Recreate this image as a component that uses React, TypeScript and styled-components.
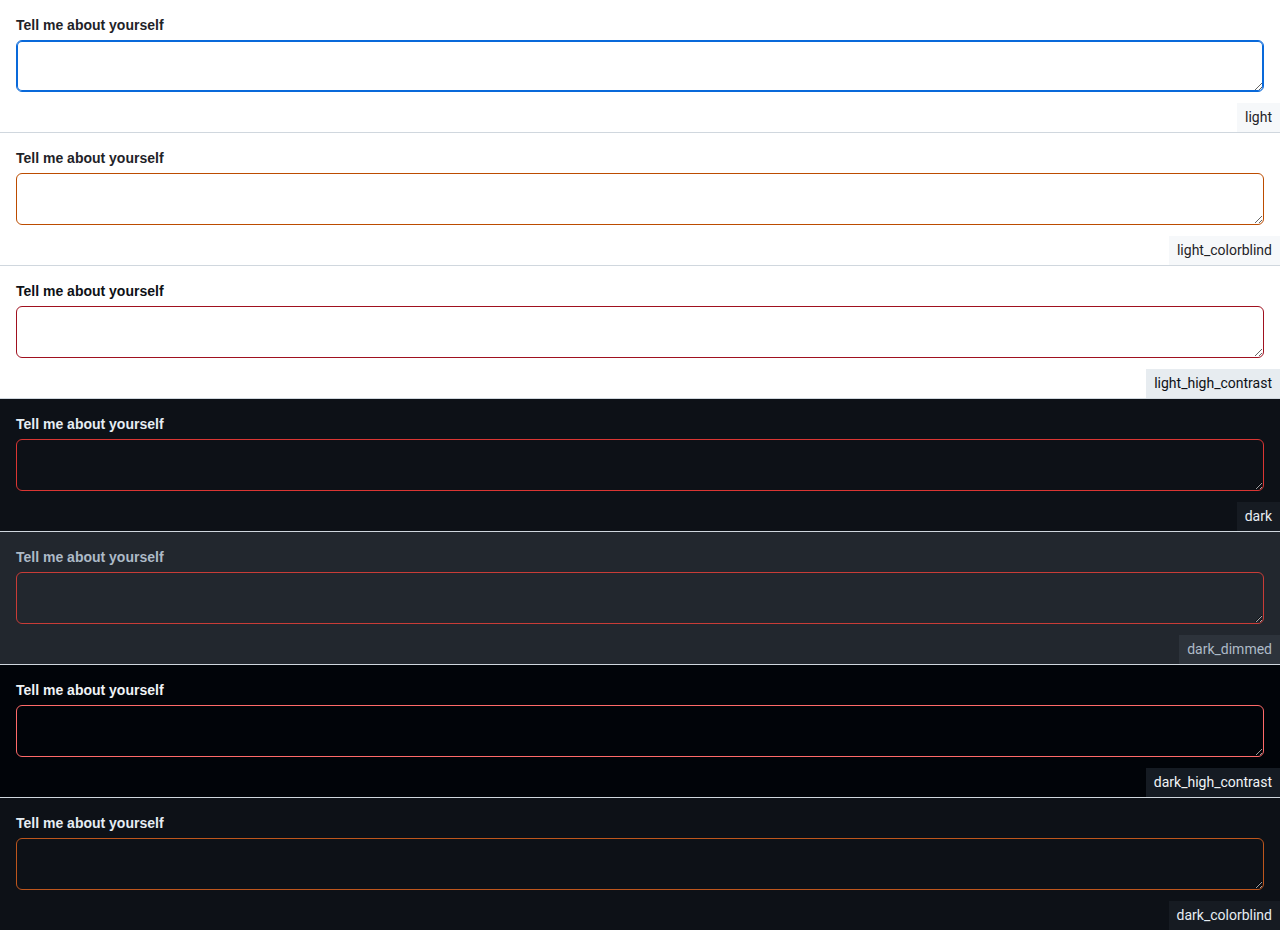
import React from 'react';
import styled, { createGlobalStyle } from 'styled-components';

const GlobalStyle = createGlobalStyle`
  html, body {
    margin: 0;
    padding: 0;
    background: #ffffff;
  }
  * {
    box-sizing: border-box;
  }
`;

type Theme = {
  name: string;
  bg: string;
  fg: string;
  border: string;
  tagBg: string;
  tagFg: string;
  focused?: boolean;
};

const themes: Theme[] = [
  { name: 'light', bg: '#ffffff', fg: '#1f2328', border: '#0969da', tagBg: '#f6f8fa', tagFg: '#1f2328', focused: true },
  { name: 'light_colorblind', bg: '#ffffff', fg: '#1f2328', border: '#bc4c00', tagBg: '#f6f8fa', tagFg: '#1f2328' },
  { name: 'light_high_contrast', bg: '#ffffff', fg: '#0e1116', border: '#a0111f', tagBg: '#e7ecf0', tagFg: '#0e1116' },
  { name: 'dark', bg: '#0d1117', fg: '#e6edf3', border: '#da3633', tagBg: '#161b22', tagFg: '#e6edf3' },
  { name: 'dark_dimmed', bg: '#22272e', fg: '#adbac7', border: '#c93c37', tagBg: '#2d333b', tagFg: '#adbac7' },
  { name: 'dark_high_contrast', bg: '#010409', fg: '#f0f3f6', border: '#ff6a69', tagBg: '#151b23', tagFg: '#f0f3f6' },
  { name: 'dark_colorblind', bg: '#0d1117', fg: '#e6edf3', border: '#bd561d', tagBg: '#161b22', tagFg: '#e6edf3' },
];

const Panel = styled.section<{ $bg: string }>`
  display: flex;
  flex-direction: column;
  padding: 15px 0 0 16px;
  height: 133px;
  background: ${(p) => p.$bg};
  border-bottom: 1px solid #d0d7de;
`;

const Label = styled.label<{ $fg: string }>`
  display: block;
  font-family: 'Liberation Sans', Arial, sans-serif;
  font-size: 14px;
  font-weight: 700;
  line-height: 20px;
  color: ${(p) => p.$fg};
`;

const TextArea = styled.textarea<{ $border: string; $bg: string; $focused?: boolean }>`
  display: block;
  width: 1248px;
  height: 52px;
  margin-top: 5px;
  padding: 8px 12px;
  border: 1px solid ${(p) => p.$border};
  border-radius: 6px;
  background: ${(p) => p.$bg};
  box-shadow: ${(p) => (p.$focused ? `inset 0 0 0 1px ${p.$border}` : 'none')};
  font-family: 'Liberation Sans', Arial, sans-serif;
  font-size: 14px;
  outline: none;
  resize: vertical;
`;

const Tag = styled.div<{ $bg: string; $fg: string }>`
  align-self: flex-end;
  margin-top: 11px;
  height: 29px;
  padding: 0 8px 2px;
  display: flex;
  align-items: center;
  background: ${(p) => p.$bg};
  color: ${(p) => p.$fg};
  font-family: Roboto, 'Liberation Sans', sans-serif;
  font-size: 14px;
`;

const App = () => {
  return (
    <>
      <GlobalStyle />
      {themes.map((t) => (
        <Panel key={t.name} $bg={t.bg}>
          <Label $fg={t.fg} htmlFor={`ta-${t.name}`}>
            Tell me about yourself
          </Label>
          <TextArea id={`ta-${t.name}`} $border={t.border} $bg={t.bg} $focused={t.focused} />
          <Tag $bg={t.tagBg} $fg={t.tagFg}>
            {t.name}
          </Tag>
        </Panel>
      ))}
    </>
  );
};

export default App;
